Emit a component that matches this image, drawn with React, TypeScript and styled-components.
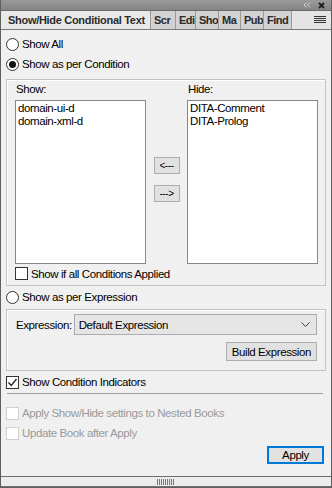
import React from 'react'
import styled, { createGlobalStyle, css } from 'styled-components'

const Global = createGlobalStyle`
  html, body {
    margin: 0;
    padding: 0;
    background: #f0f0f0;
  }
  body {
    font-family: "Liberation Sans", Arial, sans-serif;
    font-size: 11.5px;
    letter-spacing: -0.4px;
    color: #000;
  }
`

const Panel = styled.div`
  width: 332px;
  height: 488px;
  box-sizing: border-box;
  border: 1px solid #5f5f5f;
  border-top: 0;
  display: flex;
  flex-direction: column;
  background: #f0f0f0;
  overflow: hidden;
`

const TitleBar = styled.div`
  height: 12px;
  background: linear-gradient(#9a9a9a, #848484);
  display: flex;
  align-items: center;
  justify-content: flex-end;
  gap: 7px;
  padding-right: 6px;
`

const TabStrip = styled.div`
  height: 18px;
  display: flex;
  background: #e4e4e4;
  border-bottom: 1px solid #7a7a7a;
  border-top: 1px solid #6a6a6a;
`

const Tab = styled.div<{ $active?: boolean; $w: number }>`
  width: ${p => p.$w}px;
  flex: none;
  box-sizing: border-box;
  padding-left: 3px;
  font-weight: bold;
  font-size: 11px;
  letter-spacing: -0.5px;
  line-height: 18px;
  white-space: nowrap;
  overflow: hidden;
  color: #2b2b2b;
  border-right: 1px solid #9a9a9a;
  background: ${p => (p.$active ? '#e9e9e9' : '#d2d2d2')};
  ${p =>
    p.$active &&
    css`
      padding-left: 7px;
      letter-spacing: -0.3px;
    `}
`

const TabFill = styled.div`
  flex: 1;
  display: flex;
  justify-content: flex-end;
  align-items: center;
  padding-right: 5px;
`

const Content = styled.div`
  flex: 1;
  display: flex;
  flex-direction: column;
  padding: 5px 5px 0 5px;
`

const OptionRow = styled.label<{ $disabled?: boolean }>`
  height: 18px;
  display: flex;
  align-items: center;
  gap: 3px;
  color: ${p => (p.$disabled ? '#9a9a9a' : '#000')};
  white-space: nowrap;
`

const RadioCircle = styled.span<{ $on?: boolean }>`
  width: 11px;
  height: 11px;
  border: 1px solid #333;
  border-radius: 50%;
  background: #fff;
  display: flex;
  align-items: center;
  justify-content: center;
  flex: none;
  &::after {
    content: '';
    display: ${p => (p.$on ? 'block' : 'none')};
    width: 7px;
    height: 7px;
    border-radius: 50%;
    background: #111;
  }
`

const CheckBox = styled.span<{ $disabled?: boolean }>`
  width: 11px;
  height: 11px;
  flex: none;
  border: 1px solid ${p => (p.$disabled ? '#cfcfcf' : '#333')};
  background: #fff;
  display: flex;
  align-items: center;
  justify-content: center;
`

const Group = styled.div`
  border: 1px solid #c3c3c3;
  box-shadow: inset 1px 1px 0 #fff;
`

const ConditionGroup = styled(Group)`
  margin-top: 6px;
  padding: 2px 7px 4px 8px;
`

const Columns = styled.div`
  display: flex;
`

const ListColumn = styled.div`
  display: flex;
  flex-direction: column;
  width: 131px;
`

const ListLabel = styled.div`
  height: 14px;
  line-height: 14px;
  padding-left: 1px;
  margin-bottom: 4px;
`

const ListBox = styled.div`
  height: 164px;
  box-sizing: border-box;
  border: 1px solid #828790;
  background: #fff;
  padding: 1px 2px;
  line-height: 13px;
`

const MoveButtons = styled.div`
  flex: 1;
  display: flex;
  flex-direction: column;
  align-items: center;
  justify-content: center;
  gap: 11px;
  padding-top: 12px;
`

const Button = styled.button<{ $primary?: boolean }>`
  font: inherit;
  letter-spacing: inherit;
  color: #000;
  background: #e1e1e1;
  border: 1px solid #adadad;
  margin: 0;
  padding: 0 5px;
  height: 19px;
  cursor: default;
  ${p =>
    p.$primary &&
    css`
      border: 2px solid #0078d7;
      height: 18px;
      width: 57px;
      padding: 0;
    `}
`

const SmallButton = styled(Button)`
  width: 26px;
  height: 17px;
  padding: 0;
  font-size: 10px;
`

const CheckRow = styled(OptionRow)`
  margin-top: 2px;
  height: 15px;
`

const ExpressionGroup = styled(Group)`
  margin-top: 3px;
  height: 56px;
  padding: 4px 8px 0 9px;
  display: flex;
  flex-direction: column;
  gap: 7px;
`

const ExprRow = styled.div`
  display: flex;
  align-items: center;
  gap: 2px;
`

const Select = styled.div`
  flex: 1;
  height: 21px;
  box-sizing: border-box;
  border: 1px solid #acacac;
  background: #e5e5e5;
  display: flex;
  align-items: center;
  justify-content: space-between;
  padding: 0 6px 0 4px;
`

const ExprActions = styled.div`
  display: flex;
  justify-content: flex-end;
`

const Separator = styled.div`
  height: 1px;
  background: #a0a0a0;
  margin: 2px 3px 10px 1px;
`

const Footer = styled.div`
  display: flex;
  justify-content: flex-end;
  padding: 4px 2px 0 0;
`

const GripBar = styled.div`
  height: 10px;
  margin-top: 12px;
  border-top: 1px solid #6f6f6f;
  border-bottom: 1px solid #6f6f6f;
  background: #ececec;
  display: flex;
  align-items: center;
  justify-content: center;
`

const Tick = () => (
  <svg width="11" height="11" viewBox="0 0 11 11">
    <path d="M1.5 5.5 L4.2 8.5 L9.5 2" fill="none" stroke="#222" strokeWidth="1.3" />
  </svg>
)

const Chevron = () => (
  <svg width="9" height="5" viewBox="0 0 9 5">
    <path d="M0.5 0.5 L4.5 4.5 L8.5 0.5" fill="none" stroke="#444" strokeWidth="1" />
  </svg>
)

const Hamburger = () => (
  <svg width="12" height="8" viewBox="0 0 12 8">
    {[0.5, 2.5, 4.5, 6.5].map(y => (
      <line key={y} x1="0" x2="12" y1={y} y2={y} stroke="#333" strokeWidth="1" />
    ))}
  </svg>
)

const TitleIcons = () => (
  <>
    <svg width="8" height="6" viewBox="0 0 8 6">
      <path d="M3.5 0.5 L1 3 L3.5 5.5 M7 0.5 L4.5 3 L7 5.5" fill="none" stroke="#cfcfcf" strokeWidth="1" />
    </svg>
    <svg width="7" height="7" viewBox="0 0 7 7">
      <path d="M1 1 L6 6 M6 1 L1 6" fill="none" stroke="#1e1e1e" strokeWidth="1.8" />
    </svg>
  </>
)

const Grip = () => (
  <svg width="20" height="6" viewBox="0 0 20 6">
    {Array.from({ length: 9 }).map((_, i) => (
      <rect key={i} x={1 + i * 2} y="0" width="1" height="6" fill="#777" />
    ))}
  </svg>
)

// tab labels are shown as the panel clips them
const tabs = [
  { label: 'Show/Hide Conditional Text', w: 150, active: true },
  { label: 'Scr', w: 25 },
  { label: 'Edi', w: 20 },
  { label: 'Sho', w: 23 },
  { label: 'Ma', w: 22 },
  { label: 'Pub', w: 23 },
  { label: 'Find', w: 28 }
]

export default function App() {
  return (
    <>
      <Global />
      <Panel>
        <TitleBar>
          <TitleIcons />
        </TitleBar>
        <TabStrip>
          {tabs.map(t => (
            <Tab key={t.label} $w={t.w} $active={t.active}>
              {t.label}
            </Tab>
          ))}
          <TabFill>
            <Hamburger />
          </TabFill>
        </TabStrip>
        <Content>
          <OptionRow>
            <RadioCircle />
            Show All
          </OptionRow>
          <OptionRow style={{ marginTop: 2 }}>
            <RadioCircle $on />
            Show as per Condition
          </OptionRow>
          <ConditionGroup>
            <Columns>
              <ListColumn>
                <ListLabel>Show:</ListLabel>
                <ListBox>
                  <div>domain-ui-d</div>
                  <div>domain-xml-d</div>
                </ListBox>
              </ListColumn>
              <MoveButtons>
                <SmallButton>&lt;---</SmallButton>
                <SmallButton>---&gt;</SmallButton>
              </MoveButtons>
              <ListColumn>
                <ListLabel>Hide:</ListLabel>
                <ListBox>
                  <div>DITA-Comment</div>
                  <div>DITA-Prolog</div>
                </ListBox>
              </ListColumn>
            </Columns>
            <CheckRow>
              <CheckBox />
              Show if all Conditions Applied
            </CheckRow>
          </ConditionGroup>
          <OptionRow style={{ marginTop: 2 }}>
            <RadioCircle />
            Show as per Expression
          </OptionRow>
          <ExpressionGroup>
            <ExprRow>
              <span>Expression:</span>
              <Select>
                <span>Default Expression</span>
                <Chevron />
              </Select>
            </ExprRow>
            <ExprActions>
              <Button>Build Expression</Button>
            </ExprActions>
          </ExpressionGroup>
          <OptionRow style={{ marginTop: 2 }}>
            <CheckBox>
              <Tick />
            </CheckBox>
            Show Condition Indicators
          </OptionRow>
          <Separator />
          <OptionRow $disabled>
            <CheckBox $disabled />
            Apply Show/Hide settings to Nested Books
          </OptionRow>
          <OptionRow $disabled style={{ marginTop: 2 }}>
            <CheckBox $disabled />
            Update Book after Apply
          </OptionRow>
          <Footer>
            <Button $primary>Apply</Button>
          </Footer>
        </Content>
        <GripBar>
          <Grip />
        </GripBar>
      </Panel>
    </>
  )
}
